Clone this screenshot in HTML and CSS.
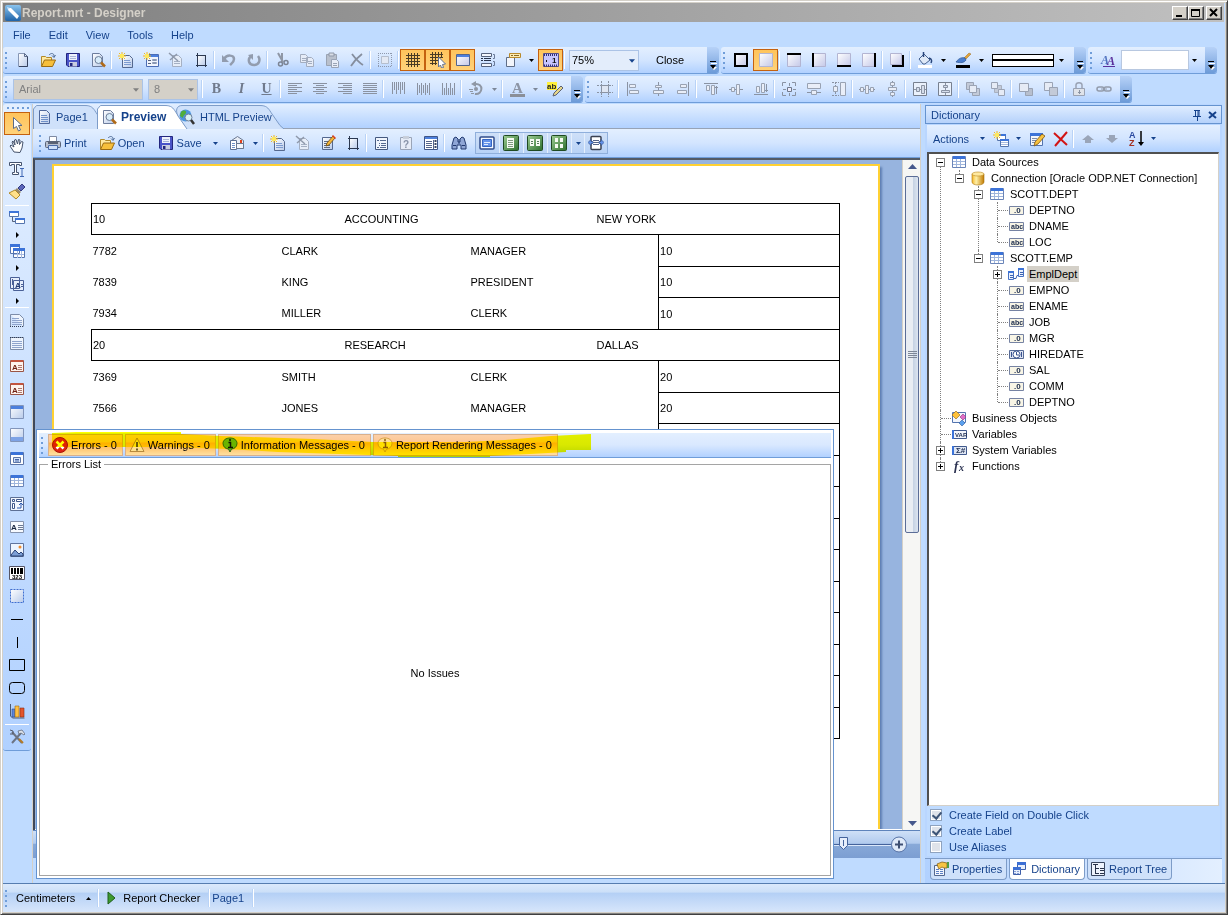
FILE: index.html
```
<!DOCTYPE html>
<html lang="en">
<head>
    <meta charset="UTF-8">
    <meta name="viewport" content="width=device-width, initial-scale=1.0">
    <title>Report.mrt - Designer</title>
    <link rel="stylesheet" href="styles.css">
</head>
<body>

    <!-- Shared gradients -->
    <svg class="gradients" aria-hidden="true">
        <defs>
            <linearGradient id="gBlue" x1="0" y1="0" x2="1" y2="1"><stop offset="0" stop-color="#fff"/><stop offset="1" stop-color="#b9cbea"/></linearGradient>
            <linearGradient id="gLilac" x1="0" y1="0" x2="1" y2="1"><stop offset="0" stop-color="#fff"/><stop offset="1" stop-color="#c4c8e8"/></linearGradient>
            <linearGradient id="gGreen" x1="0" y1="0" x2="1" y2="1"><stop offset="0" stop-color="#9fcf95"/><stop offset="1" stop-color="#2c6e2c"/></linearGradient>
            <linearGradient id="gGold" x1="0" y1="0" x2="1" y2="0"><stop offset="0" stop-color="#f4b72a"/><stop offset=".35" stop-color="#fff0a8"/><stop offset="1" stop-color="#c07a00"/></linearGradient>
            <linearGradient id="gLogo" x1="0" y1="0" x2="0" y2="1"><stop offset="0" stop-color="#8ac4ee"/><stop offset="1" stop-color="#1f63a8"/></linearGradient>
        </defs>
    </svg>

    <!-- Icon sprite -->
    <svg class="sprite" aria-hidden="true">
        <symbol id="logo" viewBox="0 0 16 16"><rect width="16" height="16" rx="2" fill="url(#gLogo)"/><path d="M3 3l3 0 8 8-2 3-9-9z" fill="#fff"/><path d="M2 2l3 1-2 2z" fill="#cfe6fa"/></symbol>
        <symbol id="new" viewBox="0 0 16 16"><path d="M3.500 1.500h6l3 3v10h-9z" fill="url(#gBlue)" stroke="#8797b5"/><path d="M12.500 4v10.500H4" fill="none" stroke="#34415e"/><path d="M9.500 1.500v3h3z" fill="#dfe8f6" stroke="#5e6d8c"/></symbol>
        <symbol id="open" viewBox="0 0 16 16"><path d="M1.500 14V4.500h4l1 1h5V8" fill="#ffe9a0" stroke="#b28a2a"/><path d="M1.500 14.500L4.500 8h11l-3 6.500z" fill="#f6bf3c" stroke="#9a6b12"/><path d="M9 3c2-2 4-2 5 0v2M12 3.500l2 2 1.500-2.500" fill="none" stroke="#4f6b96"/></symbol>
        <symbol id="save" viewBox="0 0 16 16"><path d="M1.500 1.500h13v13H3l-1.500-1.500z" fill="#4a54c8" stroke="#23277e"/><path d="M4 2h8v6H4z" fill="#eef2fc"/><path d="M4 10h8v4.500H4z" fill="#c9cde0"/><path d="M5 11h2.500v3H5z" fill="#23277e"/><path d="M5 4.500h6M5 6.500h6" stroke="#a8b4d8"/></symbol>
        <symbol id="preview" viewBox="0 0 16 16"><path d="M2.500 1.500h7l3 3v10h-10z" fill="url(#gBlue)" stroke="#6d7d9d"/><circle cx="8.500" cy="8" r="3.500" fill="#d8ecfa" stroke="#6e7f99"/><path d="M11 10.500l4 4" stroke="#b06a18" stroke-width="2.500"/></symbol>
        <symbol id="star" viewBox="0 0 16 16"><path d="M4 0v8M0 4h8M1 1l6 6M7 1L1 7" stroke="#f2b822"/><rect x="2" y="2" width="4" height="4" fill="#ffe95c"/></symbol>
        <symbol id="newpage" viewBox="0 0 16 16"><path d="M4.500 3.500h7l3 3v9h-10z" fill="url(#gBlue)" stroke="#54688f"/><path d="M6 8.500h6M6 10.500h7M6 12.500h7" stroke="#7d9bd0"/><use href="#star"/></symbol>
        <symbol id="newform" viewBox="0 0 16 16"><path d="M3.500 2.500h12v12h-12z" fill="#f1f5fd" stroke="#4b6db5"/><path d="M4 3h11v2H4z" fill="#4d80dd"/><path d="M5 8.500h3M5 11.500h3" stroke="#56637c"/><path d="M9.500 7.500h4v1h-4zM9.500 10.500h4v1h-4z" fill="#fff" stroke="#8a98b4"/><use href="#star"/></symbol>
        <symbol id="delpage" viewBox="0 0 16 16"><path d="M4.500 3.500h6l3 3v8h-9z" fill="#e6edf8" stroke="#a5b0c3"/><path d="M6 9.500h6M6 11.500h6" stroke="#a5b0c3"/><path d="M1 1l9 8M9 2L2 8" stroke="#8f99ab" stroke-width="1.500"/></symbol>
        <symbol id="pagesetup" viewBox="0 0 16 16"><path d="M4.500 3.500h8v10h-8z" fill="url(#gBlue)"/><path d="M4.500 1v14M12.500 3v12M3 3.500h10M3 13.500h11" stroke="#2b3850"/></symbol>
        <symbol id="undo" viewBox="0 0 16 16"><path d="M3 7c3-5 10-4 10 0 0 3-2 4-4 6" fill="none" stroke="#929cae" stroke-width="2.500"/><path d="M1 3v7h7z" fill="#929cae"/></symbol>
        <symbol id="redo" viewBox="0 0 16 16"><path d="M5 4c-4 4-2 9 3 9s7-5 4-9" fill="none" stroke="#929cae" stroke-width="2.500"/><path d="M7 2v6L2 3z" fill="#929cae"/></symbol>
        <symbol id="cut" viewBox="0 0 16 16"><path d="M4 1l5 9M8 1v9" stroke="#8f97a5" stroke-width="2"/><circle cx="6.500" cy="12" r="2" fill="none" stroke="#7b8494" stroke-width="1.500"/><circle cx="12" cy="10.500" r="2" fill="none" stroke="#7b8494" stroke-width="1.500"/></symbol>
        <symbol id="copy" viewBox="0 0 16 16"><path d="M1.500 2.500h5l2 2v6h-7zM7.500 5.500h5l2 2v7h-7z" fill="#e6ecf7" stroke="#a3adbf"/><path d="M3 6.500h4M3 8.500h4M9 9.500h4M9 11.500h4" stroke="#a3adbf"/></symbol>
        <symbol id="paste" viewBox="0 0 16 16"><path d="M2.500 2.500h10v11h-10z" fill="#b9c0cc" stroke="#9aa3b2"/><path d="M5 1h5v3H5z" fill="#d7dce5" stroke="#8f98a8"/><path d="M7.500 7.500h5l2 2v6h-7z" fill="#e8edf7" stroke="#99a3b5"/><path d="M9 11.500h4M9 13.500h4" stroke="#99a3b5"/></symbol>
        <symbol id="delete" viewBox="0 0 16 16"><path d="M3 2c3 4 6 8 11 11M13 2C9 5 5 9 2 14" fill="none" stroke="#858e9e" stroke-width="1.800"/></symbol>
        <symbol id="selectall" viewBox="0 0 16 16"><path d="M1.500 1v14M1 1.500h14M14.500 1v14M1 14.500h14" fill="none" stroke="#8e99ad" stroke-dasharray="1 1"/><path d="M4.500 4.500h7v7h-7z" fill="#e3e9f4" stroke="#b5becd"/></symbol>
        <symbol id="grid" viewBox="0 0 16 16"><path d="M1 3.500h14M1 6.500h14M1 9.500h14M1 12.500h14M3.500 1v14M6.500 1v14M9.500 1v14M12.500 1v14" stroke="#4a3c24"/></symbol>
        <symbol id="gridsnap" viewBox="0 0 16 16"><path d="M0 2.500h13M0 5.500h13M0 8.500h8M0 11.500h7M2.500 0v13M5.500 0v13M8.500 0v6M11.500 0v6" stroke="#4a3c24"/><path d="M8.500 5l7 7-3 .5 1 3-2 .5-1-3-2 2z" fill="#fff" stroke="#637292"/></symbol>
        <symbol id="win" viewBox="0 0 16 16"><path d="M1.500 2.500h13v11h-13z" fill="url(#gLilac)" stroke="#52658d"/><path d="M2 3h12v2H2z" fill="#4d80dd"/></symbol>
        <symbol id="order" viewBox="0 0 16 16"><path d="M1.500 1.500h10v3h-10zM1.500 11.500h10v3h-10z" fill="#f3f6fc" stroke="#56637c"/><path d="M1 6.500h2M4 6.500h7M1 8.500h2M4 8.500h7" stroke="#28334a"/><path d="M13 2.500h1.500v4H13M13 9.500h1.500v4H13" fill="none" stroke="#6a7a98"/></symbol>
        <symbol id="labels" viewBox="0 0 16 16"><path d="M1.500 5.500h8v9h-8z" fill="#f2f5fb" stroke="#5f6d86"/><path d="M4.500 1.500h11v4h-11z" fill="#fdebb0" stroke="#b98a2b"/><path d="M6 3.500h2M9 3.500h5" stroke="#8b6a25"/></symbol>
        <symbol id="ruler" viewBox="0 0 16 16"><path d="M.5 1.500h15v13H.5z" fill="#c6c5ff" stroke="#55508e"/><path d="M1 3h14M1 13.500h14" stroke="#352f75" stroke-width="2" stroke-dasharray="1 1"/><text x="9" y="11" font-size="8" font-weight="bold" fill="#111">1</text><rect x="3" y="8" width="1" height="2" fill="#111"/></symbol>
        <symbol id="b-all" viewBox="0 0 16 16"><path d="M2 2h12v12H2z" fill="url(#gLilac)" stroke="#000" stroke-width="2"/></symbol>
        <symbol id="b-none" viewBox="0 0 16 16"><path d="M1.500 1.500h13v13h-13z" fill="url(#gLilac)" stroke="#b3b5d2"/></symbol>
        <symbol id="b-top" viewBox="0 0 16 16"><use href="#b-none"/><path d="M1 2h14" stroke="#000" stroke-width="2"/></symbol>
        <symbol id="b-left" viewBox="0 0 16 16"><use href="#b-none"/><path d="M2 1v14" stroke="#000" stroke-width="2"/></symbol>
        <symbol id="b-bottom" viewBox="0 0 16 16"><use href="#b-none"/><path d="M1 14h14" stroke="#000" stroke-width="2"/></symbol>
        <symbol id="b-right" viewBox="0 0 16 16"><use href="#b-none"/><path d="M14 1v14" stroke="#000" stroke-width="2"/></symbol>
        <symbol id="b-shadow" viewBox="0 0 16 16"><path d="M1.500 1.500h11v11h-11z" fill="url(#gLilac)" stroke="#b3b5d2"/><path d="M3 14h11V3" fill="none" stroke="#000" stroke-width="2"/></symbol>
        <symbol id="fill" viewBox="0 0 16 16"><path d="M2 7l5-5 6 6-5 4H6z" fill="#dfe9f7" stroke="#45618f"/><path d="M6.500 0v5M12 6c3 1 3 3 2 5" fill="none" stroke="#28467c" stroke-width="1.500"/><path d="M1 13h14v3H1z" fill="#fff"/></symbol>
        <symbol id="pen" viewBox="0 0 16 16"><path d="M14 1l2 1-5 5-2-1z" fill="#e2a33a" stroke="#9a6a1f" stroke-width=".5"/><path d="M1 10c3-4 6-5 9-4l1 2c-2 3-5 3-10 2z" fill="#4c7fcf" stroke="#27508f" stroke-width=".7"/><path d="M1 13h14v3H1z" fill="#000"/></symbol>
        <symbol id="styles" viewBox="0 0 16 16"><text x="1" y="12" font-size="12" font-weight="bold" font-style="italic" font-family="Liberation Serif, serif" fill="#4f72c0">A</text><text x="7" y="13" font-size="12" font-weight="bold" font-style="italic" font-family="Liberation Serif, serif" fill="#5a2f9c">A</text><path d="M3 14.500h12" stroke="#5a2f9c"/></symbol>

        <symbol id="al-l" viewBox="0 0 16 16"><path d="M1 2.500h14M1 4.500h9M1 6.500h14M1 8.500h9M1 10.500h14M1 12.500h9" stroke="#8a92a1"/></symbol>
        <symbol id="al-c" viewBox="0 0 16 16"><path d="M1 2.500h14M4 4.500h8M1 6.500h14M4 8.500h8M1 10.500h14M4 12.500h8" stroke="#8a92a1"/></symbol>
        <symbol id="al-r" viewBox="0 0 16 16"><path d="M1 2.500h14M6 4.500h9M1 6.500h14M6 8.500h9M1 10.500h14M6 12.500h9" stroke="#8a92a1"/></symbol>
        <symbol id="al-j" viewBox="0 0 16 16"><path d="M1 2.500h14M1 4.500h14M1 6.500h14M1 8.500h14M1 10.500h14M1 12.500h14" stroke="#8a92a1"/></symbol>
        <symbol id="v-t" viewBox="0 0 16 16"><path d="M2.500 1v12M4.500 1v8M6.500 1v12M8.500 1v8M10.500 1v12M12.500 1v8M14.500 1v12" stroke="#8a92a1"/></symbol>
        <symbol id="v-m" viewBox="0 0 16 16"><path d="M2.500 2v12M4.500 4v8M6.500 2v12M8.500 4v8M10.500 2v12M12.500 4v8M14.500 2v12" stroke="#8a92a1"/></symbol>
        <symbol id="v-b" viewBox="0 0 16 16"><path d="M2.500 2v12M4.500 7v7M6.500 2v12M8.500 7v7M10.500 2v12M12.500 7v7M14.500 2v12" stroke="#8a92a1"/></symbol>
        <symbol id="rotate" viewBox="0 0 16 16"><path d="M7 3c9-1 8 11 0 10" fill="none" stroke="#8f97a4" stroke-width="2"/><path d="M8 0v6L3 3z" fill="#8f97a4"/><path d="M1 8.500h4M2 10.500h3M3 12.500h3" stroke="#8f97a4"/><circle cx="8" cy="8" r="2" fill="#8f97a4"/></symbol>
        <symbol id="fontcolor" viewBox="0 0 16 16"><text x="3" y="12" font-size="15" font-weight="bold" font-family="Liberation Serif, serif" fill="#8d95a5">A</text><path d="M1 13h15v3H1z" fill="#8a8f98"/></symbol>
        <symbol id="marker" viewBox="0 0 16 16"><path d="M0 1h10v8H0z" fill="#fff13c"/><text x="0" y="8" font-size="8" font-weight="bold" fill="#222">ab</text><path d="M14 5l2 2-7 7-3 1 1-3z" fill="#e5d58a" stroke="#5c6272"/></symbol>
        <symbol id="togrid" viewBox="0 0 16 16"><path d="M0 4.500h16M0 11.500h16M4.500 0v16M11.500 0v16" stroke="#8a93a3" stroke-dasharray="2 1"/><path d="M4.500 4.500h7v7h-7z" fill="#dfe6f3" stroke="#8a93a3"/></symbol>
        <symbol id="a-left" viewBox="0 0 16 16"><path d="M2.500 1v14" stroke="#8a93a3"/><path d="M4.500 3.500h6v3h-6zM4.500 9.500h9v3h-9z" fill="#e9eef8" stroke="#99a2b2"/></symbol>
        <symbol id="a-center" viewBox="0 0 16 16"><path d="M8.500 1v14" stroke="#8a93a3"/><path d="M5.500 4.500h6v2h-6zM3.500 9.500h10v3h-10z" fill="#e9eef8" stroke="#99a2b2"/></symbol>
        <symbol id="a-right" viewBox="0 0 16 16"><path d="M13.500 1v14" stroke="#8a93a3"/><path d="M5.500 3.500h6v3h-6zM2.500 9.500h9v3h-9z" fill="#e9eef8" stroke="#99a2b2"/></symbol>
        <symbol id="a-top" viewBox="0 0 16 16"><path d="M1 2.500h14M13.500 5v8M12 6.500h3" stroke="#8a93a3"/><path d="M3.500 4.500h3v5h-3zM8.500 4.500h3v9h-3z" fill="#e9eef8" stroke="#99a2b2"/></symbol>
        <symbol id="a-middle" viewBox="0 0 16 16"><path d="M1 8.500h14" stroke="#8a93a3"/><path d="M3.500 6.500h3v4h-3zM8.500 3.500h3v10h-3z" fill="#e9eef8" stroke="#99a2b2"/></symbol>
        <symbol id="a-bottom" viewBox="0 0 16 16"><path d="M1 13.500h14M13.500 3v8M12 9.500h3" stroke="#8a93a3"/><path d="M3.500 5.500h3v6h-3zM8.500 2.500h3v9h-3z" fill="#e9eef8" stroke="#99a2b2"/></symbol>
        <symbol id="s-both" viewBox="0 0 16 16"><path d="M1.500 5V1.500H5M11 1.500h3.500V5M14.500 11v3.500H11M5 14.500H1.500V11M8.500 2v3M8.500 12v3M2 8.500h3M12 8.500h3" fill="none" stroke="#8a93a3"/><path d="M6.500 6.500h4v4h-4z" fill="#eef" stroke="#6f788a"/></symbol>
        <symbol id="s-w" viewBox="0 0 16 16"><path d="M1.500 2.500h13v5h-13z" fill="#e9eef8" stroke="#99a2b2"/><path d="M1 11.500h4M11 11.500h4" stroke="#8a93a3"/><path d="M5.500 9.500h5v4h-5z" fill="#e9eef8" stroke="#99a2b2"/></symbol>
        <symbol id="s-h" viewBox="0 0 16 16"><path d="M9.500 1.500h5v13h-5z" fill="#e9eef8" stroke="#99a2b2"/><path d="M4.500 1v4M4.500 11v4M1 1.500h7M1 14.500h7" stroke="#8a93a3" stroke-dasharray="2 1"/><path d="M2.500 5.500h4v5h-4z" fill="#e9eef8" stroke="#99a2b2"/></symbol>
        <symbol id="sp-h" viewBox="0 0 16 16"><path d="M0 8.500h16" stroke="#8a93a3"/><path d="M1.500 6.500h3v4h-3zM6.500 4.500h3v8h-3zM11.500 6.500h3v4h-3z" fill="#e9eef8" stroke="#99a2b2"/></symbol>
        <symbol id="sp-v" viewBox="0 0 16 16"><path d="M8.500 0v16" stroke="#8a93a3"/><path d="M6.500 1.500h4v3h-4zM4.500 6.500h8v3h-8zM6.500 11.500h4v3h-4z" fill="#e9eef8" stroke="#99a2b2"/></symbol>
        <symbol id="c-h" viewBox="0 0 16 16"><path d="M1.500 1.500h13v13h-13z" fill="#eaf1fc" stroke="#77808f"/><path d="M2 8.500h12" stroke="#8a93a3"/><path d="M4.500 6.500h3v4h-3zM9.500 4.500h3v8h-3z" fill="#d6deec" stroke="#8a93a3"/></symbol>
        <symbol id="c-v" viewBox="0 0 16 16"><path d="M1.500 1.500h13v13h-13z" fill="#eaf1fc" stroke="#77808f"/><path d="M8.500 2v12" stroke="#8a93a3"/><path d="M6.500 4.500h4v2h-4zM4.500 9.500h8v2h-8z" fill="#d6deec" stroke="#8a93a3"/></symbol>
        <symbol id="z-front" viewBox="0 0 16 16"><path d="M1.500 1.500h7v7h-7zM7.500 7.500h7v7h-7z" fill="#c3cad8" stroke="#9aa3b4"/><path d="M4.500 4.500h7v7h-7z" fill="#e6ebf5" stroke="#9aa3b4"/></symbol>
        <symbol id="z-back" viewBox="0 0 16 16"><path d="M4.500 4.500h7v7h-7z" fill="#c3cad8" stroke="#a8b0bf"/><path d="M1.500 1.500h6v6h-6zM8.500 8.500h6v6h-6z" fill="#e6ebf5" stroke="#9aa3b4"/></symbol>
        <symbol id="z-fwd" viewBox="0 0 16 16"><path d="M7.500 7.500h7v7h-7z" fill="#b7bfce" stroke="#9aa3b4"/><path d="M1.500 2.500h9v8h-9z" fill="#e6ebf5" stroke="#9aa3b4"/></symbol>
        <symbol id="z-bwd" viewBox="0 0 16 16"><path d="M1.500 1.500h8v8h-8z" fill="#e6ebf5" stroke="#9aa3b4"/><path d="M6.500 6.500h8v8h-8z" fill="#c3cad8" stroke="#9aa3b4"/></symbol>
        <symbol id="lock" viewBox="0 0 16 16"><path d="M5 8V4c0-3 6-3 6 0v4" fill="none" stroke="#9aa3b4" stroke-width="1.500"/><path d="M2.500 7.500h11v7h-11z" fill="#dfe3ea" stroke="#9aa3b4"/><path d="M8.500 9v4M7 11.500h3" stroke="#8a93a3"/></symbol>
        <symbol id="link" viewBox="0 0 16 16"><rect x="1" y="6" width="7" height="4" rx="2" fill="none" stroke="#929bab" stroke-width="1.500"/><rect x="8" y="6" width="7" height="4" rx="2" fill="none" stroke="#929bab" stroke-width="1.500"/><path d="M5 8h6" stroke="#929bab"/></symbol>

        <symbol id="page" viewBox="0 0 16 16"><path d="M3.500 1.500h7l3 3v10h-10z" fill="url(#gBlue)" stroke="#4f679a"/><path d="M5 6.500h6M5 8.500h7M5 10.500h7M5 12.500h7" stroke="#6f90c8"/></symbol>
        <symbol id="globe" viewBox="0 0 16 16"><circle cx="6.500" cy="6.500" r="6" fill="#4c95dd"/><path d="M2 3c3-3 6-1 5 1S4 6 4 9L1 7zM8 8c2-1 4 0 4 1l-3 3z" fill="#4fae3a"/><circle cx="9.500" cy="8.500" r="3.500" fill="#d8f0f4" stroke="#6e7f99"/><path d="M12 11l3 4" stroke="#333" stroke-width="2.500"/></symbol>
        <symbol id="print" viewBox="0 0 16 16"><path d="M4.500 1.500h7v5h-7z" fill="#fff" stroke="#7e8aa3"/><rect x=".5" y="6.500" width="15" height="6" rx="1" fill="#b8bfcd" stroke="#5a6478"/><path d="M3 7h10v2H3z" fill="#5a6274"/><path d="M3.500 10.500h9v4h-9z" fill="#cfe1fb" stroke="#4b6ba8"/></symbol>
        <symbol id="mail" viewBox="0 0 16 16"><path d="M2.500 5.500l6-4 6 4v8h-12z" fill="#e8edf6" stroke="#6b7890"/><path d="M1.500 5.500h6v9h-6z" fill="#fff" stroke="#5c7095"/><path d="M3 8.500h3M3 10.500h3M3 12.500h3" stroke="#6f90c8"/><path d="M7.500 8.500h7v5h-7z" fill="#f4f6fb" stroke="#6b7890"/><rect x="11" y="5" width="2" height="3" fill="#e0401b"/></symbol>
        <symbol id="editpage" viewBox="0 0 16 16"><path d="M2.500 2.500h10v12h-10z" fill="url(#gBlue)" stroke="#54688f"/><path d="M4 6.500h5M4 8.500h4M4 10.500h6M4 12.500h6" stroke="#5d6a82"/><path d="M13 1l2 2-6 7-3 1 1-3z" fill="#f4b63a" stroke="#6d4a12" stroke-width=".8"/><path d="M13 0l3 3-1 1-3-3z" fill="#d93b1f"/></symbol>
        <symbol id="outline" viewBox="0 0 16 16"><path d="M2.500 2.500h12v12h-12z" fill="#f0f5fd" stroke="#45597f"/><path d="M4 5.500h2M7 5.500h6M6 8.500h1M8 8.500h5M6 10.500h1M8 10.500h5M4 12.500h2M7 12.500h6" stroke="#566a90"/></symbol>
        <symbol id="params" viewBox="0 0 16 16"><path d="M2.500 2.500h11v12h-11z" fill="#e6ecf7" stroke="#9aa5b8"/><path d="M5 1h6v3H5z" fill="#c8cfdb"/><text x="5" y="13" font-size="10" font-weight="bold" fill="#8893a8">?</text></symbol>
        <symbol id="thumbs" viewBox="0 0 16 16"><path d="M1.500 1.500h13v13h-13z" fill="#fff" stroke="#3f5688"/><path d="M2 2h12v2H2z" fill="#4d80dd"/><path d="M3 6.500h6M3 8.500h6M3 10.500h6M3 12.500h6M10.500 5v9" stroke="#55658a"/><path d="M12.500 5v9" stroke="#3a4762" stroke-width="2" stroke-dasharray="2 1"/></symbol>
        <symbol id="find" viewBox="0 0 16 16"><path d="M3 3l2-1 2 2v3h2V4l2-2 2 1 2 7v4h-5v-4H6v4H1v-4z" fill="#8fa6d6" stroke="#223a70"/><path d="M2 10.500h3M11 10.500h3M8 4v5" stroke="#223a70"/></symbol>
        <symbol id="m-full" viewBox="0 0 16 16"><rect x="1" y="2" width="14" height="12" rx="1" fill="#f4f8ff" stroke="#314c8c" stroke-width="1.500"/><path d="M3.500 4.500h9v7h-9z" fill="#6593ea" stroke="#3465c4"/><path d="M5 7.500h6M5 9.500h4" stroke="#e0ebff"/></symbol>
        <symbol id="m-bg" viewBox="0 0 16 16"><rect x=".5" y=".5" width="15" height="15" rx="1" fill="url(#gGreen)" stroke="#1f4a22"/></symbol>
        <symbol id="m-one" viewBox="0 0 16 16"><use href="#m-bg"/><path d="M4 3h7v10H4z" fill="#f5faf2"/><path d="M5 5.500h5M5 7.500h5M5 9.500h5M5 11.500h5" stroke="#7f9a80"/></symbol>
        <symbol id="m-two" viewBox="0 0 16 16"><use href="#m-bg"/><path d="M3 4h4v7H3zM9 4h4v7H9z" fill="#f5faf2"/><path d="M4 6.500h2M4 8.500h2M10 6.500h2M10 8.500h2" stroke="#58795a"/></symbol>
        <symbol id="m-multi" viewBox="0 0 16 16"><use href="#m-bg"/><path d="M4 3h3v4H4zM9 3h3v4H9zM4 9h3v4H4zM9 9h3v4H9z" fill="#f5faf2"/></symbol>
        <symbol id="m-width" viewBox="0 0 16 16"><rect x="3" y="1.500" width="10" height="13" rx="1" fill="#fff" stroke="#3b4252" stroke-width="1.500"/><path d="M0 7.500l3-3v2h2v2H3v2zM16 7.500l-3-3v2h-2v2h2v2z" fill="#6593ea" stroke="#27447f" stroke-width=".6"/><path d="M5 5.500h6M5 7.500h6M5 9.500h6" stroke="#55658a"/></symbol>

        <symbol id="cursor" viewBox="0 0 16 16"><path d="M4.500 1.500v11l3-2 2 4.500 2-1-2-4.500h3.500z" fill="#fff" stroke="#5b6b88"/></symbol>
        <symbol id="hand" viewBox="0 0 16 16"><path d="M5 14L1 8l1-1 3 2-2-5 1-1 2 4-.5-5 1.500-.5L8.500 6l1-4.500 1.500.5-.5 4.500 2-3 1.500.5-1 6-2 4.500z" fill="#fff" stroke="#46536c"/></symbol>
        <symbol id="textedit" viewBox="0 0 16 16"><path d="M.5 1.500h12v3h-2v-1h-3v8h2v2h-6v-2h2v-8h-3v1h-2z" fill="#fff" stroke="#45536e"/><path d="M11 7.500h4M13 7.500v8M11 15.500h4" stroke="#3f67b5"/></symbol>
        <symbol id="brush" viewBox="0 0 16 16"><path d="M13 0l3 3-4 4-3-3z" fill="#5b66bb" stroke="#343c80"/><path d="M8 4l4 4-2 2-4-4z" fill="#9a8a6a"/><path d="M6 6l5 5-4 4L0 9z" fill="#ffe08a" stroke="#b08a2a"/></symbol>
        <symbol id="bands" viewBox="0 0 16 16"><path d="M.5 1.500h9v5h-9zM6.500 8.500h9v5h-9z" fill="#fff" stroke="#5474ae"/><path d="M0 1h10v2H0zM6 8h10v2H6z" fill="#3c73d8"/><path d="M3.500 7v4.500H6" fill="none" stroke="#56637c"/></symbol>
        <symbol id="cross" viewBox="0 0 16 16"><path d="M1.500 1.500h9v9h-9zM4.500 5.500h11v9h-11z" fill="#fff" stroke="#5474ae"/><path d="M1 1h10v3H1zM4 5h12v3H4z" fill="#3c73d8"/><path d="M5 11.500h10M8.500 8v7M12.500 8v7" stroke="#a8bbe0"/></symbol>
        <symbol id="comps" viewBox="0 0 16 16"><path d="M1.500 1.500h9v11h-9zM4.500 4.500h10v10h-10z" fill="#e6eefb" stroke="#4a6097"/><text x="6" y="12" font-size="8" font-weight="bold" fill="#243b75">A</text><path d="M12 8.500h2M12 10.500h2M3.500 3v6" stroke="#4a6097"/></symbol>
        <symbol id="rtitle" viewBox="0 0 16 16"><path d="M1.500 2.500h9l4 4v8" fill="#eef4fd" stroke="#7d8da9"/><path d="M1.500 2.500v12" stroke="#7d8da9"/><path d="M3 6.500h7M3 8.500h10M3 10.500h10M3 12.500h10" stroke="#8fa4cc"/><path d="M1 14.500h14" stroke="#333e55" stroke-dasharray="1 1"/></symbol>
        <symbol id="rsum" viewBox="0 0 16 16"><path d="M1.500 2.500h13v12h-13z" fill="#eef4fd" stroke="#7d8da9"/><path d="M3 6.500h10M3 8.500h10M3 10.500h10M3 12.500h10" stroke="#8fa4cc"/><path d="M1 2.500h14" stroke="#333e55" stroke-dasharray="1 1"/></symbol>
        <symbol id="phead" viewBox="0 0 16 16"><path d="M1.500 2.500h13v11h-13z" fill="#fdf3ee" stroke="#9a5546"/><path d="M2 2h12v2H2z" fill="#c2543f"/><text x="3" y="12" font-size="8" font-weight="bold" fill="#6e1f12">A</text><path d="M9 7.500h4M9 9.500h4M9 11.500h4" stroke="#b07a70"/></symbol>
        <symbol id="data" viewBox="0 0 16 16"><path d="M1.500 1.500h13v13h-13z" fill="url(#gBlue)" stroke="#8295ba"/><path d="M2 2h12v3H2z" fill="#4d80dd"/></symbol>
        <symbol id="foot" viewBox="0 0 16 16"><path d="M1.500 1.500h13v13h-13z" fill="url(#gBlue)" stroke="#8295ba"/><path d="M2 10h12v4H2z" fill="#7ea3e6"/></symbol>
        <symbol id="panelb" viewBox="0 0 16 16"><path d="M1.500 2.500h13v12h-13z" fill="#fff" stroke="#5d76a8"/><path d="M2 2h12v3H2z" fill="#3c73d8"/><path d="M4.500 7.500h7v5h-7z" fill="#d6e4fb" stroke="#5d76a8"/><path d="M6 9.500h4M6 11h4" stroke="#4766a6"/></symbol>
        <symbol id="table" viewBox="0 0 16 16"><path d="M1.500 2.500h13v11h-13z" fill="#fff" stroke="#6b85b8"/><path d="M2 2h12v3H2z" fill="#3c73d8"/><path d="M2 7.500h12M2 10.500h12M5.500 5v8M9.500 5v8" stroke="#9fb5dc"/></symbol>
        <symbol id="crosstab" viewBox="0 0 16 16"><path d="M1.500 1.500h13v13h-13z" fill="#f3f7fe" stroke="#5d7095"/><path d="M3.500 3.500h2v2h-2zM7.500 3.500h5v2h-5zM3.500 7.500h2v5h-2z" fill="#fff" stroke="#41598c"/><path d="M8 12h4V8M10 9l2-2 2 2" fill="none" stroke="#2e5bb0"/></symbol>
        <symbol id="text" viewBox="0 0 16 16"><path d="M1.500 2.500h13v11h-13z" fill="#f7faff" stroke="#8593ad"/><text x="2" y="11" font-size="8" font-weight="bold" fill="#16243f">A</text><path d="M9 6.500h5M9 8.500h5M9 10.500h5" stroke="#6c7a94"/></symbol>
        <symbol id="image" viewBox="0 0 16 16"><path d="M1.500 1.500h13v13h-13z" fill="#eef5ff" stroke="#60749d"/><circle cx="11" cy="5" r="1.500" fill="#f08b2c"/><path d="M2 13l4-5 4 4 2-2 2 2v2H2z" fill="#7d9fd6" stroke="#2b4374"/></symbol>
        <symbol id="barcode" viewBox="0 0 16 16"><path d="M.5 1.500h15v13H.5z" fill="#fff" stroke="#556"/><path d="M3 3v6M6 3v6M9 3v6M13 3v6" stroke="#000" stroke-width="2"/><path d="M11.500 3v6" stroke="#000"/><text x="3" y="14" font-size="6" font-weight="bold" fill="#000">323</text></symbol>
        <symbol id="shape" viewBox="0 0 16 16"><path d="M1.500 1.500h13v13h-13z" fill="url(#gBlue)" stroke="#3f6fd0" stroke-dasharray="2 1"/></symbol>
        <symbol id="hline" viewBox="0 0 16 16"><path d="M2 8.500h12" stroke="#000"/></symbol>
        <symbol id="vline" viewBox="0 0 16 16"><path d="M8.500 3v11" stroke="#000"/></symbol>
        <symbol id="rect" viewBox="0 0 16 16"><path d="M.5 2.500h15v11H.5z" fill="none" stroke="#000"/></symbol>
        <symbol id="rrect" viewBox="0 0 16 16"><rect x=".5" y="2.500" width="15" height="11" rx="3" fill="none" stroke="#000"/></symbol>
        <symbol id="chart" viewBox="0 0 16 16"><path d="M1.500 1v12l2 2h12" fill="none" stroke="#4c5a74"/><path d="M3 6h3v8H3z" fill="#5b86dc" stroke="#2a4b91" stroke-width=".6"/><path d="M6 3h4v11H6z" fill="#ffc044" stroke="#9d6a10" stroke-width=".6"/><path d="M11 5h4v9h-4z" fill="#e3542c" stroke="#8d2b10" stroke-width=".6"/></symbol>
        <symbol id="tools" viewBox="0 0 16 16"><path d="M3 14L12 4M3 3l10 11" stroke="#6c7484" stroke-width="2"/><path d="M9 2l4-1 3 4-1 1-3-2-2 1z" fill="#dde2ea" stroke="#545d6e" stroke-width=".7"/><path d="M1 1l3 1v3L1 5" fill="none" stroke="#545d6e"/><path d="M10 10l4 4" stroke="#b57b27" stroke-width="2"/></symbol>

        <symbol id="error" viewBox="0 0 16 16"><circle cx="8" cy="8" r="7.500" fill="#e02412" stroke="#a81508"/><path d="M4.500 4.500l7 7M11.500 4.500l-7 7" stroke="#fff" stroke-width="2.500"/></symbol>
        <symbol id="warning" viewBox="0 0 16 16"><path d="M8 1l7 13.500H1z" fill="#ffe08c" stroke="#b88a3c"/><path d="M8 5v5M8 11.500v2" stroke="#3a2c10" stroke-width="1.500"/></symbol>
        <symbol id="info" viewBox="0 0 16 16"><path d="M8 1c4 0 7 2 7 5.500S12 12 9.500 12L8 15l-1.500-3C4 12 1 10 1 6.500S4 1 8 1z" fill="#6ab33a" stroke="#2e6a18"/><path d="M8 2v2M6.500 5.500H8.500V10M6 10.500h5" fill="none" stroke="#111" stroke-width="1.500"/></symbol>
        <symbol id="rinfo" viewBox="0 0 16 16"><path d="M8 1c4 0 7 2 7 5.500S12 12 9.500 12L8 15l-1.500-3C4 12 1 10 1 6.500S4 1 8 1z" fill="#ffe09a" stroke="#d8a046"/><path d="M8 2v2M6.500 5.500H8.500V10M6 10.500h5" fill="none" stroke="#8a5a10" stroke-width="1.500"/></symbol>

        <symbol id="newds" viewBox="0 0 16 16"><path d="M4.500 3.500h8v6h-8zM7.500 8.500h8v7h-8z" fill="#fff" stroke="#5474ae"/><path d="M4 3h9v2H4zM7 8h9v2H7z" fill="#3c73d8"/><path d="M8 11.500h7M8 13.500h7" stroke="#a8bbe0"/><use href="#star"/></symbol>
        <symbol id="editds" viewBox="0 0 16 16"><path d="M1.500 2.500h12v12h-12z" fill="#f2f6fd" stroke="#5474ae"/><path d="M1 2h13v3H1z" fill="#3c73d8"/><path d="M3 7.500h5M3 9.500h4M3 11.500h3" stroke="#7d8cab"/><path d="M13 3l3 2-7 8-4 2 1-4z" fill="#f8c340" stroke="#7a5414" stroke-width=".8"/></symbol>
        <symbol id="redx" viewBox="0 0 16 16"><path d="M1 2l13 12M14 1L2 15" stroke="#d21414" stroke-width="2"/></symbol>
        <symbol id="up" viewBox="0 0 16 16"><path d="M8 4l6 5h-3v3H5V9H2z" fill="#9aa5b8"/></symbol>
        <symbol id="down" viewBox="0 0 16 16"><path d="M8 12l6-5h-3V4H5v3H2z" fill="#9aa5b8"/></symbol>
        <symbol id="sort" viewBox="0 0 16 16"><text x="1" y="7" font-size="9" font-weight="bold" fill="#2a49a0">A</text><text x="1" y="15" font-size="9" font-weight="bold" fill="#a33020">Z</text><path d="M13 0v12" stroke="#000" stroke-width="1.500"/><path d="M10 11h6l-3 4z" fill="#000"/></symbol>
        <symbol id="pin" viewBox="0 0 16 16"><path d="M5 3.500h6M6.500 3v6M9 3v6M10 3v6M4 9.500h8M8.500 10v4" stroke="#14418b" fill="none"/></symbol>
        <symbol id="close" viewBox="0 0 16 16"><path d="M4 5l7 6M11 5l-7 6" stroke="#14418b" stroke-width="2"/></symbol>
        <symbol id="db" viewBox="0 0 16 16"><path d="M2 4v8c0 4 12 4 12 0V4z" fill="url(#gGold)" stroke="#a87412" stroke-width=".6"/><ellipse cx="8" cy="4" rx="6" ry="2" fill="#ffe9a0" stroke="#b98720" stroke-width=".6"/></symbol>
        <symbol id="num" viewBox="0 0 16 16"><path d="M1.500 4.500h14v8h-14z" fill="#f8f5e6" stroke="#7683a3"/><text x="6" y="11" font-size="8" font-weight="bold" fill="#20304f">.0</text></symbol>
        <symbol id="abc" viewBox="0 0 16 16"><path d="M1.500 4.500h14v8h-14z" fill="#f8f5e6" stroke="#7683a3"/><text x="3" y="11" font-size="7" font-weight="bold" fill="#20304f">abc</text></symbol>
        <symbol id="date" viewBox="0 0 16 16"><path d="M1.500 4.500h14v8h-14z" fill="#dfe5f2" stroke="#566a96"/><circle cx="8.500" cy="8.500" r="3.500" fill="#fff" stroke="#3a5390"/><path d="M8.500 6v3H11M3.500 6v5M13.500 6v5" stroke="#3a5390" fill="none"/></symbol>
        <symbol id="relation" viewBox="0 0 16 16"><path d="M.5 5.500h5v8h-5zM10.500 2.500h5v8h-5z" fill="#eaf1fd" stroke="#4671c4"/><path d="M0 5h6v2H0zM10 2h6v2h-6z" fill="#3c73d8"/><path d="M2 9.500h3M2 11.500h3M12 6.500h3M12 8.500h3M6 12.500h2l1-3h1" fill="none" stroke="#3c62b0"/></symbol>
        <symbol id="bo" viewBox="0 0 16 16"><path d="M1.500 2.500h13v10h-13z" fill="#f2f6fd" stroke="#5474ae"/><path d="M5 1l4 4-4 4-4-4z" fill="#ffc23a" stroke="#8f6312" stroke-width=".6"/><path d="M12 4l3 3-3 3-3-3z" fill="#df6fc8" stroke="#8b2f78" stroke-width=".6"/><path d="M11 10l3 3-3 3-3-3z" fill="#5aa0ee" stroke="#2b5ba0" stroke-width=".6"/></symbol>
        <symbol id="var" viewBox="0 0 16 16"><path d="M1.500 4.500h14v8h-14z" fill="#f4f6fb" stroke="#41598c"/><path d="M1 4h2v9H1z" fill="#3c73d8"/><text x="4" y="11" font-size="6" font-weight="bold" fill="#1c2c50">VAR</text></symbol>
        <symbol id="sysvar" viewBox="0 0 16 16"><path d="M1.500 4.500h14v8h-14z" fill="#dfe6f3" stroke="#41598c"/><path d="M1 4h2v9H1z" fill="#3c73d8"/><text x="5" y="11" font-size="8" font-weight="bold" fill="#1c2c50">Σ#</text></symbol>
        <symbol id="fx" viewBox="0 0 16 16"><text x="3" y="12" font-size="13" font-weight="bold" font-style="italic" font-family="Liberation Serif, serif" fill="#2a3150">f</text><text x="8" y="13" font-size="10" font-weight="bold" font-style="italic" font-family="Liberation Serif, serif" fill="#2a3150">x</text></symbol>
        <symbol id="props" viewBox="0 0 16 16"><path d="M1.500 4.500h10v10h-10z" fill="#f2f6fd" stroke="#54688f"/><path d="M3 8.500h3M3 10.500h3M3 12.500h3M7 8.500h3M7 10.500h3M7 12.500h3" stroke="#5b7fc4"/><path d="M4 3l5-2 5 1v5h-3l-2-1-3 2-1-2z" fill="#f6c445" stroke="#8d641a" stroke-width=".8"/><path d="M14 1h2v6h-2z" fill="#4f9c48"/></symbol>
        <symbol id="dict" viewBox="0 0 16 16"><path d="M5.500 1.500h8v7h-8zM1.500 6.500h7v7h-7z" fill="#e8effc" stroke="#3f5fa8"/><path d="M5 1h9v3H5zM1 6h8v3H1z" fill="#3c6fd4"/><path d="M2 10.500h6M2 12.500h6" stroke="#8ba2d4" stroke-dasharray="2 1"/></symbol>
        <symbol id="tree" viewBox="0 0 16 16"><path d="M1.500 1.500h13v13h-13z" fill="#eef3fc" stroke="#39465f"/><path d="M3 3.500h5M5.500 4v9M6 7.500h3M6 12.500h3M10 7.500h4M10 12.500h4M10 9.500h4" stroke="#28334a"/></symbol>
        <symbol id="play" viewBox="0 0 16 16"><path d="M5 2l7 6-7 6z" fill="#3d9a30" stroke="#1f5e1a"/></symbol>
        <symbol id="caret" viewBox="0 0 7 4"><path d="M0 0h7L3.500 4z" fill="currentColor"/></symbol>
        <symbol id="more" viewBox="0 0 8 10"><path d="M2 3h6v1H2zM2 7h6L5 10z" fill="#fff"/><path d="M1 1h6v1H1zM1 5h6L4 9z" fill="#000"/></symbol>
    </svg>

    <div class="window">
        <header class="titlebar">
            <svg class="icon"><use href="#logo"/></svg>
            <h1>Report.mrt - Designer</h1>
            <div class="window-buttons">
                <button title="Minimize"><svg viewBox="0 0 12 10"><path d="M2 8h6" stroke="#000" stroke-width="2"/></svg></button>
                <button title="Maximize"><svg viewBox="0 0 12 10"><path d="M1.500 1.500h8v7h-8z" fill="none" stroke="#000"/><path d="M1 2h9" stroke="#000" stroke-width="2"/></svg></button>
                <button class="last" title="Close"><svg viewBox="0 0 12 10"><path d="M2 1l7 7M9 1L2 8" stroke="#000" stroke-width="2"/></svg></button>
            </div>
        </header>

        <nav class="menu">
            <a href="#">File</a>
            <a href="#">Edit</a>
            <a href="#">View</a>
            <a href="#">Tools</a>
            <a href="#">Help</a>
        </nav>

        <div class="toolbar-row">
            <div class="toolbar">
                <span class="grip"></span>
                <button class="tool" title="New"><svg><use href="#new"/></svg></button>
                <button class="tool" title="Open"><svg><use href="#open"/></svg></button>
                <button class="tool" title="Save"><svg><use href="#save"/></svg></button>
                <button class="tool" title="Preview"><svg><use href="#preview"/></svg></button>
                <span class="sep"></span>
                <button class="tool" title="New Page"><svg><use href="#newpage"/></svg></button>
                <button class="tool" title="New Form"><svg><use href="#newform"/></svg></button>
                <button class="tool" title="Delete Page"><svg><use href="#delpage"/></svg></button>
                <button class="tool" title="Page Setup"><svg><use href="#pagesetup"/></svg></button>
                <span class="sep"></span>
                <button class="tool" title="Undo"><svg><use href="#undo"/></svg></button>
                <button class="tool" title="Redo"><svg><use href="#redo"/></svg></button>
                <span class="sep"></span>
                <button class="tool" title="Cut"><svg><use href="#cut"/></svg></button>
                <button class="tool" title="Copy"><svg><use href="#copy"/></svg></button>
                <button class="tool" title="Paste"><svg><use href="#paste"/></svg></button>
                <button class="tool" title="Delete"><svg><use href="#delete"/></svg></button>
                <span class="sep"></span>
                <button class="tool" title="Select All"><svg><use href="#selectall"/></svg></button>
                <span class="sep"></span>
                <button class="tool active" title="Show Grid"><svg><use href="#grid"/></svg></button>
                <button class="tool active" title="Align to Grid"><svg><use href="#gridsnap"/></svg></button>
                <button class="tool active" title="Show Headers"><svg><use href="#win"/></svg></button>
                <button class="tool" title="Show Order"><svg><use href="#order"/></svg></button>
                <button class="tool" title="Quick Info"><svg><use href="#labels"/></svg></button>
                <button class="drop black" title="Quick Info options"><svg><use href="#caret"/></svg></button>
                <button class="tool active" title="Rulers"><svg><use href="#ruler"/></svg></button>
                <span class="sep"></span>
                <span class="combo zoom">
                    <select aria-label="Zoom"><option>75%</option></select>
                    <svg><use href="#caret"/></svg>
                </span>
                <button class="text-button">Close</button>
                <button class="more" title="Toolbar options"><svg><use href="#more"/></svg></button>
            </div>
            <div class="toolbar">
                <span class="grip"></span>
                <button class="tool" title="All Borders"><svg><use href="#b-all"/></svg></button>
                <button class="tool active" title="No Border"><svg><use href="#b-none"/></svg></button>
                <span class="sep"></span>
                <button class="tool" title="Top Border"><svg><use href="#b-top"/></svg></button>
                <button class="tool" title="Left Border"><svg><use href="#b-left"/></svg></button>
                <button class="tool" title="Bottom Border"><svg><use href="#b-bottom"/></svg></button>
                <button class="tool" title="Right Border"><svg><use href="#b-right"/></svg></button>
                <span class="sep"></span>
                <button class="tool" title="Shadow"><svg><use href="#b-shadow"/></svg></button>
                <span class="sep"></span>
                <button class="tool" title="Fill Color"><svg><use href="#fill"/></svg></button>
                <button class="drop black" title="Fill colors"><svg><use href="#caret"/></svg></button>
                <button class="tool" title="Border Color"><svg><use href="#pen"/></svg></button>
                <button class="drop black" title="Border colors"><svg><use href="#caret"/></svg></button>
                <button class="line-style" title="Border Style"><span></span></button>
                <button class="drop black" title="Border styles"><svg><use href="#caret"/></svg></button>
                <button class="more" title="Toolbar options"><svg><use href="#more"/></svg></button>
            </div>
            <div class="toolbar">
                <span class="grip"></span>
                <button class="tool" title="Style Designer"><svg><use href="#styles"/></svg></button>
                <input class="style-box" type="text" aria-label="Style">
                <button class="drop black" title="Styles"><svg><use href="#caret"/></svg></button>
                <button class="more" title="Toolbar options"><svg><use href="#more"/></svg></button>
            </div>
        </div>

        <div class="toolbar-row second">
            <div class="toolbar">
                <span class="grip"></span>
                <span class="combo font disabled">
                    <select aria-label="Font" disabled><option>Arial</option></select>
                    <svg><use href="#caret"/></svg>
                </span>
                <span class="combo size disabled">
                    <select aria-label="Font size" disabled><option>8</option></select>
                    <svg><use href="#caret"/></svg>
                </span>
                <span class="sep"></span>
                <button class="tool letter bold" title="Bold">B</button>
                <button class="tool letter italic" title="Italic">I</button>
                <button class="tool letter underline" title="Underline">U</button>
                <span class="sep"></span>
                <button class="tool" title="Align Left"><svg><use href="#al-l"/></svg></button>
                <button class="tool" title="Align Center"><svg><use href="#al-c"/></svg></button>
                <button class="tool" title="Align Right"><svg><use href="#al-r"/></svg></button>
                <button class="tool" title="Justify"><svg><use href="#al-j"/></svg></button>
                <span class="sep"></span>
                <button class="tool" title="Text Top"><svg><use href="#v-t"/></svg></button>
                <button class="tool" title="Text Middle"><svg><use href="#v-m"/></svg></button>
                <button class="tool" title="Text Bottom"><svg><use href="#v-b"/></svg></button>
                <span class="sep"></span>
                <button class="tool" title="Angle"><svg><use href="#rotate"/></svg></button>
                <button class="drop gray" title="Angles"><svg><use href="#caret"/></svg></button>
                <span class="sep"></span>
                <button class="tool" title="Text Color"><svg><use href="#fontcolor"/></svg></button>
                <button class="drop gray" title="Text colors"><svg><use href="#caret"/></svg></button>
                <button class="tool" title="Text Format"><svg><use href="#marker"/></svg></button>
                <button class="more" title="Toolbar options"><svg><use href="#more"/></svg></button>
            </div>
            <div class="toolbar">
                <span class="grip"></span>
                <button class="tool" title="Snap to Grid"><svg><use href="#togrid"/></svg></button>
                <span class="sep"></span>
                <button class="tool" title="Lefts"><svg><use href="#a-left"/></svg></button>
                <button class="tool" title="Centers"><svg><use href="#a-center"/></svg></button>
                <button class="tool" title="Rights"><svg><use href="#a-right"/></svg></button>
                <span class="sep"></span>
                <button class="tool" title="Tops"><svg><use href="#a-top"/></svg></button>
                <button class="tool" title="Middles"><svg><use href="#a-middle"/></svg></button>
                <button class="tool" title="Bottoms"><svg><use href="#a-bottom"/></svg></button>
                <span class="sep"></span>
                <button class="tool" title="Same Size"><svg><use href="#s-both"/></svg></button>
                <button class="tool" title="Same Width"><svg><use href="#s-w"/></svg></button>
                <button class="tool" title="Same Height"><svg><use href="#s-h"/></svg></button>
                <span class="sep"></span>
                <button class="tool" title="Horizontal Spacing"><svg><use href="#sp-h"/></svg></button>
                <button class="tool" title="Vertical Spacing"><svg><use href="#sp-v"/></svg></button>
                <span class="sep"></span>
                <button class="tool" title="Center Horizontally"><svg><use href="#c-h"/></svg></button>
                <button class="tool" title="Center Vertically"><svg><use href="#c-v"/></svg></button>
                <span class="sep"></span>
                <button class="tool" title="Bring to Front"><svg><use href="#z-front"/></svg></button>
                <button class="tool" title="Send to Back"><svg><use href="#z-back"/></svg></button>
                <span class="sep"></span>
                <button class="tool" title="Move Forward"><svg><use href="#z-fwd"/></svg></button>
                <button class="tool" title="Move Backward"><svg><use href="#z-bwd"/></svg></button>
                <span class="sep"></span>
                <button class="tool" title="Lock"><svg><use href="#lock"/></svg></button>
                <button class="tool" title="Link"><svg><use href="#link"/></svg></button>
                <button class="more" title="Toolbar options"><svg><use href="#more"/></svg></button>
            </div>
        </div>

        <main class="workspace">
            <aside class="palette">
                <span class="palette-grip"></span>
                <button class="active" title="Select"><svg><use href="#cursor"/></svg></button>
                <button title="Hand"><svg><use href="#hand"/></svg></button>
                <button title="Text Editor"><svg><use href="#textedit"/></svg></button>
                <button title="Copy Style"><svg><use href="#brush"/></svg></button>
                <hr>
                <button title="Bands"><svg><use href="#bands"/></svg></button>
                <span class="flyout"></span>
                <button title="Cross Bands"><svg><use href="#cross"/></svg></button>
                <span class="flyout"></span>
                <button title="Components"><svg><use href="#comps"/></svg></button>
                <span class="flyout"></span>
                <hr>
                <button title="Report Title"><svg><use href="#rtitle"/></svg></button>
                <button title="Report Summary"><svg><use href="#rsum"/></svg></button>
                <button title="Page Header"><svg><use href="#phead"/></svg></button>
                <button title="Page Footer"><svg><use href="#phead"/></svg></button>
                <button title="Header"><svg><use href="#data"/></svg></button>
                <button title="Footer"><svg><use href="#foot"/></svg></button>
                <button title="Data Band"><svg><use href="#panelb"/></svg></button>
                <button title="Table"><svg><use href="#table"/></svg></button>
                <button title="Cross-Tab"><svg><use href="#crosstab"/></svg></button>
                <button title="Text"><svg><use href="#text"/></svg></button>
                <button title="Image"><svg><use href="#image"/></svg></button>
                <button title="Bar Code"><svg><use href="#barcode"/></svg></button>
                <button title="Panel"><svg><use href="#shape"/></svg></button>
                <button title="Horizontal Line"><svg><use href="#hline"/></svg></button>
                <button title="Vertical Line"><svg><use href="#vline"/></svg></button>
                <button title="Rectangle"><svg><use href="#rect"/></svg></button>
                <button title="Rounded Rectangle"><svg><use href="#rrect"/></svg></button>
                <button title="Chart"><svg><use href="#chart"/></svg></button>
                <hr>
                <button title="Options"><svg><use href="#tools"/></svg></button>
            </aside>

            <section class="editor">
                <div class="tabs">
                    <button class="tab page-tab">
                        <svg class="shape" viewBox="0 0 86 24"><path d="M.5 24V4l3-3.500H52c6 0 8 2 11 7l9 13 4 3.500" fill="#cfe1fa" stroke="#7d9cc8"/></svg>
                        <svg class="icon"><use href="#page"/></svg>
                        <span>Page1</span>
                    </button>
                    <button class="tab preview-tab">
                        <svg class="shape" viewBox="0 0 104 24"><path d="M.5 25V4l3-3.500H68c6 0 8 2 11 7l9 13 5 4.500" fill="#fff" stroke="#7d9cc8"/></svg>
                        <svg class="icon"><use href="#preview"/></svg>
                        <span>Preview</span>
                    </button>
                    <button class="tab html-tab">
                        <svg class="shape" viewBox="0 0 116 24"><path d="M11 24L2 11C-1 5 1 .5 6 .5H84c6 0 8 2 11 7l9 13 4 3.500" fill="#cfe1fa" stroke="#7d9cc8"/></svg>
                        <svg class="icon"><use href="#globe"/></svg>
                        <span>HTML Preview</span>
                    </button>
                </div>

                <div class="preview-bar">
                    <span class="grip"></span>
                    <button class="labelled first"><svg><use href="#print"/></svg>Print</button>
                    <button class="labelled"><svg><use href="#open"/></svg>Open</button>
                    <button class="labelled"><svg><use href="#save"/></svg>Save</button>
                    <button class="drop wide" title="Save options"><svg><use href="#caret"/></svg></button>
                    <button class="tool" title="Send"><svg><use href="#mail"/></svg></button>
                    <button class="drop" title="Send options"><svg><use href="#caret"/></svg></button>
                    <span class="sep"></span>
                    <button class="tool" title="New Page"><svg><use href="#newpage"/></svg></button>
                    <button class="tool" title="Delete Page"><svg><use href="#delpage"/></svg></button>
                    <button class="tool" title="Edit Page"><svg><use href="#editpage"/></svg></button>
                    <button class="tool" title="Page Size"><svg><use href="#pagesetup"/></svg></button>
                    <span class="sep"></span>
                    <button class="tool" title="Bookmarks"><svg><use href="#outline"/></svg></button>
                    <button class="tool" title="Parameters"><svg><use href="#params"/></svg></button>
                    <button class="tool" title="Thumbnails"><svg><use href="#thumbs"/></svg></button>
                    <span class="sep"></span>
                    <button class="tool" title="Find"><svg><use href="#find"/></svg></button>
                    <div class="modes">
                        <button title="Full Screen"><svg><use href="#m-full"/></svg></button>
                        <button title="One Page"><svg><use href="#m-one"/></svg></button>
                        <button title="Two Pages"><svg><use href="#m-two"/></svg></button>
                        <button title="Multiple Pages"><svg><use href="#m-multi"/></svg></button>
                        <button class="arrow" title="Page grid"><svg><use href="#caret"/></svg></button>
                        <button title="Page Width"><svg><use href="#m-width"/></svg></button>
                    </div>
                </div>

                <div class="viewer">
                    <div class="canvas">
                        <div class="sheet">
                            <table class="report">
                                <colgroup>
                                    <col class="c1"><col class="c2"><col class="c3"><col class="c3"><col class="c2"><col>
                                </colgroup>
                                <tbody>
                                    <tr class="dept"><td colspan="2">10</td><td colspan="2">ACCOUNTING</td><td colspan="2">NEW YORK</td></tr>
                                    <tr><td>7782</td><td colspan="2">CLARK</td><td colspan="2">MANAGER</td><td class="no">10</td></tr>
                                    <tr><td>7839</td><td colspan="2">KING</td><td colspan="2">PRESIDENT</td><td class="no">10</td></tr>
                                    <tr><td>7934</td><td colspan="2">MILLER</td><td colspan="2">CLERK</td><td class="no">10</td></tr>
                                    <tr class="dept"><td colspan="2">20</td><td colspan="2">RESEARCH</td><td colspan="2">DALLAS</td></tr>
                                    <tr><td>7369</td><td colspan="2">SMITH</td><td colspan="2">CLERK</td><td class="no">20</td></tr>
                                    <tr><td>7566</td><td colspan="2">JONES</td><td colspan="2">MANAGER</td><td class="no">20</td></tr>
                                    <tr><td colspan="5"></td><td class="no"></td></tr>
                                    <tr><td colspan="5"></td><td class="no"></td></tr>
                                    <tr><td colspan="5"></td><td class="no"></td></tr>
                                    <tr><td colspan="5"></td><td class="no"></td></tr>
                                    <tr><td colspan="5"></td><td class="no"></td></tr>
                                    <tr><td colspan="5"></td><td class="no"></td></tr>
                                    <tr><td colspan="5"></td><td class="no"></td></tr>
                                    <tr><td colspan="5"></td><td class="no"></td></tr>
                                    <tr><td colspan="5"></td><td class="no"></td></tr>
                                    <tr><td colspan="5"></td><td class="no"></td></tr>
                                </tbody>
                            </table>
                        </div>
                    </div>
                    <div class="scrollbar">
                        <svg viewBox="0 0 9 5"><path d="M0 5h9L4.500 0z" fill="#46588c"/></svg>
                        <div class="thumb"><span></span></div>
                        <svg viewBox="0 0 9 5"><path d="M0 0h9L4.500 5z" fill="#46588c"/></svg>
                    </div>
                </div>

                <div class="zoombar">
                    <svg class="track" viewBox="0 0 80 20">
                        <path d="M0 9.500h58" stroke="#44639c"/><path d="M0 10.500h58" stroke="#dbe8fb"/>
                        <path d="M5.500 2.500h8v8l-4 4-4-4z" fill="#e6eefb" stroke="#44639c"/><path d="M9.500 5v6" stroke="#44639c"/>
                        <circle cx="65" cy="9.500" r="7.500" fill="#dfe9f8" stroke="#5672a6"/><path d="M61 9.500h8M65 5.500v8" stroke="#3e4f72" stroke-width="2"/>
                    </svg>
                </div>

                <!-- Report checker window -->
                <section class="checker">
                    <div class="checker-bar">
                        <span class="grip"></span>
                        <button class="checker-button"><svg><use href="#error"/></svg>Errors - 0</button>
                        <button class="checker-button"><svg><use href="#warning"/></svg>Warnings - 0</button>
                        <button class="checker-button"><svg><use href="#info"/></svg>Information Messages - 0</button>
                        <button class="checker-button"><svg><use href="#rinfo"/></svg>Report Rendering Messages - 0</button>
                        <svg class="highlight" viewBox="0 0 552 30"><path d="M13 4l24-1h105v2l40 2 30 1 62 2 60 3h92l40-2 46-4 39-2h1v16h-25v2l-36 2-40 2v1h-92v-1l-60-2-60-2-50-3-60-2H13z" fill="#ffff00"/></svg>
                    </div>
                    <fieldset>
                        <legend>Errors List</legend>
                        <p>No Issues</p>
                    </fieldset>
                </section>
            </section>

            <aside class="dictionary">
                <div class="panel-title">
                    <h2>Dictionary</h2>
                    <button title="Auto Hide"><svg><use href="#pin"/></svg></button>
                    <button title="Close"><svg><use href="#close"/></svg></button>
                </div>
                <div class="panel-bar">
                    <button class="actions">Actions</button>
                    <button class="drop" title="Actions menu"><svg><use href="#caret"/></svg></button>
                    <button class="tool" title="New Item"><svg><use href="#newds"/></svg></button>
                    <button class="drop" title="New items"><svg><use href="#caret"/></svg></button>
                    <button class="tool" title="Edit"><svg><use href="#editds"/></svg></button>
                    <button class="tool" title="Delete"><svg><use href="#redx"/></svg></button>
                    <span class="sep"></span>
                    <button class="tool" title="Move Up"><svg><use href="#up"/></svg></button>
                    <button class="tool" title="Move Down"><svg><use href="#down"/></svg></button>
                    <button class="tool" title="Sort"><svg><use href="#sort"/></svg></button>
                    <button class="drop" title="Sort options"><svg><use href="#caret"/></svg></button>
                </div>

                <div class="tree-box">
                    <ul class="tree">
                        <li>
                            <div class="node"><i class="box minus"></i><svg><use href="#table"/></svg><span>Data Sources</span></div>
                            <ul>
                                <li>
                                    <div class="node"><i class="box minus"></i><svg><use href="#db"/></svg><span>Connection [Oracle ODP.NET Connection]</span></div>
                                    <ul>
                                        <li>
                                            <div class="node"><i class="box minus"></i><svg><use href="#table"/></svg><span>SCOTT.DEPT</span></div>
                                            <ul>
                                                <li><div class="node"><i></i><svg><use href="#num"/></svg><span>DEPTNO</span></div></li>
                                                <li><div class="node"><i></i><svg><use href="#abc"/></svg><span>DNAME</span></div></li>
                                                <li><div class="node"><i></i><svg><use href="#abc"/></svg><span>LOC</span></div></li>
                                            </ul>
                                        </li>
                                        <li>
                                            <div class="node"><i class="box minus"></i><svg><use href="#table"/></svg><span>SCOTT.EMP</span></div>
                                            <ul>
                                                <li><div class="node"><i class="box plus"></i><svg><use href="#relation"/></svg><span class="selected">EmplDept</span></div></li>
                                                <li><div class="node"><i></i><svg><use href="#num"/></svg><span>EMPNO</span></div></li>
                                                <li><div class="node"><i></i><svg><use href="#abc"/></svg><span>ENAME</span></div></li>
                                                <li><div class="node"><i></i><svg><use href="#abc"/></svg><span>JOB</span></div></li>
                                                <li><div class="node"><i></i><svg><use href="#num"/></svg><span>MGR</span></div></li>
                                                <li><div class="node"><i></i><svg><use href="#date"/></svg><span>HIREDATE</span></div></li>
                                                <li><div class="node"><i></i><svg><use href="#num"/></svg><span>SAL</span></div></li>
                                                <li><div class="node"><i></i><svg><use href="#num"/></svg><span>COMM</span></div></li>
                                                <li><div class="node"><i></i><svg><use href="#num"/></svg><span>DEPTNO</span></div></li>
                                            </ul>
                                        </li>
                                    </ul>
                                </li>
                            </ul>
                        </li>
                        <li><div class="node"><i></i><svg><use href="#bo"/></svg><span>Business Objects</span></div></li>
                        <li><div class="node"><i></i><svg><use href="#var"/></svg><span>Variables</span></div></li>
                        <li><div class="node"><i class="box plus"></i><svg><use href="#sysvar"/></svg><span>System Variables</span></div></li>
                        <li><div class="node"><i class="box plus"></i><svg><use href="#fx"/></svg><span>Functions</span></div></li>
                    </ul>
                </div>

                <div class="checks">
                    <label><input type="checkbox" checked>Create Field on Double Click</label>
                    <label><input type="checkbox" checked>Create Label</label>
                    <label><input type="checkbox">Use Aliases</label>
                </div>

                <div class="panel-tabs">
                    <button><svg><use href="#props"/></svg>Properties</button>
                    <button class="current"><svg><use href="#dict"/></svg>Dictionary</button>
                    <button><svg><use href="#tree"/></svg>Report Tree</button>
                </div>
            </aside>
        </main>

        <footer class="statusbar">
            <span class="grip"></span>
            <button class="units">Centimeters <svg viewBox="0 0 5 3"><path d="M0 3h5L2.500 0z" fill="#000"/></svg></button>
            <span class="sep"></span>
            <button class="check"><svg class="icon"><use href="#play"/></svg>Report Checker</button>
            <span class="sep"></span>
            <span class="current-page">Page1</span>
            <span class="sep"></span>
        </footer>
    </div>

</body>
</html>
```
FILE: styles.css
```
* {
    box-sizing: border-box;
}

body {
    margin: 0;
    height: 100vh;
    overflow: hidden;
    font-family: "Liberation Sans", Arial, sans-serif;
    font-size: 11px;
    line-height: 16px;
    color: #000;
}

button,
input,
select {
    font: inherit;
    color: inherit;
    margin: 0;
    padding: 0;
}

button {
    display: flex;
    align-items: center;
    justify-content: center;
    flex: none;
    background: none;
    border: 0;
    white-space: nowrap;
}

svg {
    display: block;
    flex: none;
}

.gradients {
    position: absolute;
    width: 0;
    height: 0;
}

.sprite {
    display: none;
}

.icon {
    width: 16px;
    height: 16px;
}

/* Window frame */
.window {
    height: 100%;
    display: flex;
    flex-direction: column;
    background: #bfdbff;
    border: 1px solid #d4d0c8;
    border-right-color: #404040;
    border-bottom-color: #404040;
    box-shadow: inset 1px 1px 0 #fff, inset -1px -1px 0 #808080, inset 0 0 0 2px #d4d0c8;
    padding: 2px;
}

.titlebar {
    display: flex;
    align-items: center;
    flex: none;
    height: 19px;
    margin-right: 1px;
    padding: 0 2px;
    background: linear-gradient(to right, #808080, #c0c0c0);
    color: #d4d0c8;
}

.titlebar h1 {
    margin: 0 auto 0 1px;
    font-size: 12px;
    line-height: 18px;
}

.window-buttons {
    display: flex;
}

.window-buttons button {
    width: 16px;
    height: 14px;
    background: #d4d0c8;
    border: 1px solid #fff;
    border-right-color: #404040;
    border-bottom-color: #404040;
    box-shadow: inset -1px -1px 0 #808080;
}

.window-buttons .last {
    margin-left: 2px;
}

.window-buttons svg {
    width: 12px;
    height: 10px;
}

.menu {
    display: flex;
    flex: none;
    align-items: center;
    gap: 18px;
    height: 25px;
    padding-left: 10px;
}

.menu a {
    color: #15428b;
    text-decoration: none;
}

/* Toolbars */
.toolbar-row {
    display: flex;
    flex: none;
    gap: 2px;
    height: 29px;
}

.toolbar-row.second {
    height: 28px;
}

.toolbar {
    display: flex;
    align-items: center;
    height: 27px;
    background: linear-gradient(#e3efff, #d3e5ff 50%, #b1d1ff);
    border-bottom: 1px solid #6f9dd9;
    border-radius: 3px;
}

.grip {
    flex: none;
    width: 7px;
    height: 18px;
    background: linear-gradient(#6f9dd9, #6f9dd9) 2px 1px / 2px 2px no-repeat,
        linear-gradient(#6f9dd9, #6f9dd9) 2px 6px / 2px 2px no-repeat,
        linear-gradient(#6f9dd9, #6f9dd9) 2px 11px / 2px 2px no-repeat,
        linear-gradient(#6f9dd9, #6f9dd9) 2px 16px / 2px 2px no-repeat;
}

.sep {
    flex: none;
    width: 3px;
    height: 18px;
    background: linear-gradient(to right, #b9d3f7 1px, #fff 1px, #fff 2px, transparent 2px);
}

.tool {
    justify-content: flex-start;
    width: 25px;
    height: 22px;
    padding-left: 5px;
}

.tool svg,
.labelled svg,
.modes svg {
    width: 16px;
    height: 16px;
}

.tool.active {
    padding-left: 4px;
    background: linear-gradient(#ffc45c, #ffd27a);
    border: 1px solid #c4610f;
}

.drop {
    width: 13px;
    height: 22px;
    color: #15428b;
}

.drop svg {
    width: 5px;
    height: 3px;
}

.drop.black {
    color: #000;
}

.drop.gray {
    color: #7c8798;
}

.more {
    align-self: stretch;
    align-items: flex-end;
    width: 12px;
    padding-bottom: 3px;
    border-radius: 0 3px 3px 0;
    background: linear-gradient(#b7d2f8, #6d9bd8);
}

.more svg {
    width: 8px;
    height: 10px;
}

.combo {
    position: relative;
    flex: none;
    height: 21px;
}

.combo select {
    width: 100%;
    height: 100%;
    padding: 0 2px;
    appearance: none;
    background: #e3edfb;
    border: 1px solid #abc3e6;
    border-radius: 0;
    color: #000;
    opacity: 1;
}

.combo svg {
    position: absolute;
    right: 4px;
    top: 9px;
    width: 6px;
    height: 4px;
    color: #15428b;
}

.combo.disabled select {
    padding: 0 5px;
    background: #d4d0c8;
    color: #808080;
}

.combo.disabled svg {
    color: #808080;
}

.combo.zoom {
    width: 70px;
    margin-left: 3px;
}

.combo.font {
    width: 130px;
    margin: 0 5px 0 3px;
}

.combo.size {
    width: 50px;
    margin-right: 3px;
}

.text-button {
    width: 62px;
    margin-right: 6px;
}

.line-style {
    width: 62px;
    height: 13px;
    margin-left: 4px;
    background: #fff;
    border: 1px solid #000;
}

.line-style span {
    width: 100%;
    height: 2px;
    background: #000;
}

.line-style + .drop {
    width: 15px;
    margin-right: 5px;
}

.style-box {
    width: 68px;
    height: 20px;
    margin-left: 1px;
    background: #fff;
    border: 1px solid #b8c8e0;
    border-radius: 0;
}

.style-box + .drop {
    width: 10px;
    margin-right: 6px;
}

.letter {
    justify-content: center;
    padding: 0;
    font-family: "Liberation Serif", "Times New Roman", serif;
    font-size: 14px;
    font-weight: bold;
    color: #707a8c;
}

.italic {
    font-style: italic;
}

.underline {
    text-decoration: underline;
}

.second .tool + .more {
    margin-left: 4px;
}

/* Main area */
.workspace {
    display: flex;
    flex: 1;
    min-height: 0;
    padding-right: 3px;
}

.palette {
    display: flex;
    flex-direction: column;
    align-items: center;
    align-self: flex-start;
    flex: none;
    width: 28px;
    margin-right: 1px;
    padding-bottom: 1px;
    background: linear-gradient(#e3efff, #b1d1ff);
    border-bottom: 1px solid #6f9dd9;
    border-radius: 3px;
}

.palette-grip {
    width: 23px;
    height: 8px;
    background: repeating-linear-gradient(to right, #6f9dd9 0 2px, transparent 2px 5px) 1px 3px / 100% 2px no-repeat;
}

.palette button {
    align-items: flex-start;
    width: 26px;
    height: 23px;
    padding-top: 3px;
}

.palette button svg {
    width: 16px;
    height: 16px;
}

.palette .active {
    padding-top: 3px;
    background: linear-gradient(#ffc45c, #ffd27a);
    border: 1px solid #c4610f;
}

.palette hr {
    width: 24px;
    height: 1px;
    margin: 1px 0;
    border: 0;
    background: #fff;
}

.flyout {
    height: 6px;
    margin: 2px 0;
    border: 3px solid transparent;
    border-right-width: 0;
    border-left-color: #000;
}

.editor {
    position: relative;
    display: flex;
    flex-direction: column;
    flex: 1;
    min-width: 0;
    margin-right: 4px;
    padding-bottom: 25px;
    border-left: 1px solid #d4d0c8;
    border-right: 1px solid #d4d0c8;
}

.tabs {
    display: flex;
    align-items: flex-end;
    flex: none;
    height: 25px;
    border-bottom: 1px solid #97a3b6;
    background: linear-gradient(#e3efff, #b1d1ff);
}

.tab {
    position: relative;
    justify-content: flex-start;
    gap: 4px;
    height: 22px;
    padding-left: 3px;
    color: #15428b;
}

.tab span,
.tab .icon {
    position: relative;
}

.tab .shape {
    position: absolute;
    left: 0;
    bottom: -1px;
    height: 24px;
}

.page-tab {
    width: 64px;
}

.page-tab .shape {
    width: 86px;
}

.preview-tab {
    z-index: 2;
    width: 79px;
    padding-left: 4px;
    font-size: 12px;
    font-weight: bold;
}

.preview-tab .shape {
    width: 104px;
}

.html-tab {
    width: 116px;
    gap: 5px;
    z-index: 3;
}

.html-tab .shape {
    width: 116px;
}

.preview-bar {
    display: flex;
    align-items: center;
    flex: none;
    height: 29px;
    padding-left: 4px;
    background: linear-gradient(#e3efff, #d3e5ff 50%, #b1d1ff);
    border-bottom: 1px solid #6f9dd9;
    color: #15428b;
}

.labelled {
    gap: 3px;
    height: 22px;
    padding: 0 6px 0 7px;
}

.labelled.first {
    padding: 0 5px 0 1px;
}

.drop.wide {
    width: 16px;
}

.modes {
    display: flex;
    height: 22px;
    margin-left: 4px;
    border: 1px solid #8fafdc;
    background: linear-gradient(#cfe0f8, #b8d2f6);
}

.modes button {
    justify-content: flex-start;
    width: 24px;
    padding-left: 3px;
    border-right: 1px solid #e5effc;
}

.modes button:last-child {
    width: 22px;
    border-right: 0;
}

.modes .arrow {
    width: 13px;
    padding-left: 4px;
}

.modes .arrow svg {
    width: 5px;
    height: 3px;
}

.viewer {
    display: flex;
    flex: 1;
    min-height: 0;
    border-top: 2px solid #525a66;
    border-left: 2px solid #404858;
}

.canvas {
    flex: 1;
    min-width: 0;
    overflow: hidden;
    padding: 4px 22px 0 17px;
    background: #97b4df;
    border-bottom: 1px solid #fff;
}

.sheet {
    height: 110%;
    padding: 37px 38px 0 37px;
    background: #fff;
    border: 2px solid #ffd133;
    box-shadow: 2px 3px 2px #5f7fb3;
}

.report {
    width: 100%;
    table-layout: fixed;
    border-collapse: collapse;
    border: 1px solid #000;
    border-left-width: 0;
    border-bottom-width: 0;
}

.report td {
    height: 31px;
    padding: 0 1px;
    border: 0;
}

.report tr:nth-child(even) td {
    height: 32px;
}

.report .dept {
    border: 1px solid #000;
}

.report .no {
    border: 1px solid #000;
}

.c1 {
    width: 189px;
}

.c2 {
    width: 63px;
}

.c3 {
    width: 126px;
}

.scrollbar {
    display: flex;
    flex-direction: column;
    align-items: center;
    flex: none;
    width: 18px;
    padding: 4px 1px 4px 2px;
    background: #f6f6f4;
    border-left: 1px solid #d4d0c8;
}

.scrollbar svg {
    width: 9px;
    height: 5px;
}

.thumb {
    display: flex;
    align-items: center;
    justify-content: center;
    width: 14px;
    height: 54%;
    margin: 7px 0 auto;
    background: linear-gradient(to right, #e9edf3 55%, #c3d0e2 56%, #dde5f0);
    border: 1px solid #5b6d97;
    border-radius: 2px;
}

.thumb span {
    width: 9px;
    height: 7px;
    background: repeating-linear-gradient(#7d8797 0 1px, transparent 1px 2px);
}

.zoombar {
    display: flex;
    align-items: center;
    justify-content: flex-end;
    flex: none;
    height: 28px;
    border-top: 1px solid #5f84bb;
    background: linear-gradient(#cfe0f7, #b2cbee 45%, #88a9d8 50%, #7c9ed2);
}

.track {
    width: 80px;
    height: 20px;
    margin-right: 6px;
}

/* Report checker */
.checker {
    position: absolute;
    left: 3px;
    right: 86px;
    bottom: 4px;
    height: 450px;
    display: flex;
    flex-direction: column;
    padding: 3px 2px 2px;
    background: #fff;
    border: 1px solid #6593cf;
}

.checker-bar {
    position: relative;
    display: flex;
    align-items: center;
    flex: none;
    gap: 2px;
    height: 25px;
    background: linear-gradient(#e3efff, #d9e8ff 50%, #b1d1ff);
    border-bottom: 1px solid #6f9dd9;
}

.checker-button {
    gap: 3px;
    height: 22px;
    padding: 0 5px 0 3px;
    background: linear-gradient(#fcd0a8, #fdc795 35%, #ffb04a 40%, #ffe0a0);
    border: 1px solid #d9b08c;
}

.checker-button svg {
    width: 16px;
    height: 16px;
}

/* Yellow marker stroke over the buttons */
.highlight {
    position: absolute;
    left: 0;
    top: -4px;
    width: 552px;
    height: 30px;
    mix-blend-mode: multiply;
    pointer-events: none;
}

.checker fieldset {
    display: flex;
    align-items: center;
    justify-content: center;
    flex: 1;
    min-width: 0;
    margin: 0;
    padding: 0 8px;
    border: 1px solid #a5a5a5;
}

.checker legend {
    padding: 0 3px;
    line-height: 12px;
}

.checker p {
    margin: 0;
}

/* Dictionary panel */
.dictionary {
    display: flex;
    flex-direction: column;
    flex: none;
    width: 297px;
    background: #b9d6ff;
}

.panel-title {
    display: flex;
    align-items: center;
    flex: none;
    height: 19px;
    margin-top: 1px;
    padding-left: 5px;
    border: 1px solid #6593cf;
    background: linear-gradient(#dfecff, #b5d2fb);
    color: #15428b;
}

.panel-title h2 {
    margin: 0 auto 0 0;
    font-size: 11px;
    font-weight: normal;
}

.panel-title svg {
    width: 16px;
    height: 16px;
}

.panel-bar {
    display: flex;
    align-items: center;
    flex: none;
    height: 27px;
    margin: 1px 2px 0;
    padding-left: 6px;
    background: linear-gradient(#e3efff, #d3e5ff 50%, #b1d1ff);
    color: #15428b;
}

.panel-bar .tool {
    width: 24px;
}

.panel-bar .drop {
    width: 12px;
}

.actions {
    margin-right: 7px;
}

.tree-box {
    flex: 1;
    min-height: 0;
    margin: 0 3px 0 2px;
    background: #fff;
    border: 1px solid #d4d0c8;
    border-top: 2px solid #505050;
    border-left: 2px solid #505050;
    padding-left: 2px;
}

.tree,
.tree ul {
    list-style: none;
    margin: 0;
    padding: 0;
}

.tree ul {
    padding-left: 19px;
}

.tree li {
    position: relative;
}

.tree li::before {
    content: "";
    position: absolute;
    left: 9px;
    top: 0;
    bottom: 0;
    border-left: 1px dotted #808080;
}

.tree li:last-child::before {
    bottom: auto;
    height: 8px;
}

.tree > li:first-child::before {
    top: 8px;
}

.node {
    position: relative;
    display: flex;
    align-items: center;
    height: 16px;
}

.node i {
    width: 10px;
    margin-left: 10px;
    border-top: 1px dotted #808080;
}

.node .box {
    width: 9px;
    height: 9px;
    margin: 0 6px 0 5px;
    border: 1px solid #808080;
    background: linear-gradient(#000, #000) center / 5px 1px no-repeat, #fff;
}

.node .plus {
    background: linear-gradient(#000, #000) center / 5px 1px no-repeat, linear-gradient(#000, #000) center / 1px 5px no-repeat, #fff;
}

.node svg {
    width: 16px;
    height: 16px;
}

.node span {
    margin-left: 3px;
    padding: 0 2px;
    white-space: nowrap;
}

.node .selected {
    background: #d4d0c8;
}

.checks {
    flex: none;
    margin: 0 2px;
    padding: 1px 3px;
    background: #bfdbff;
    color: #15428b;
}

.checks label {
    display: flex;
    align-items: center;
    height: 16px;
}

.checks input {
    width: 12px;
    height: 12px;
    margin-right: 7px;
    appearance: none;
    border: 1px solid #8fa3bf;
    background: #dfe3ea;
    box-shadow: inset 0 0 0 1px #fff;
}

.checks input:checked::before {
    content: "";
    display: block;
    width: 4px;
    height: 7px;
    margin-left: 3px;
    border: solid #3d5578;
    border-width: 0 2px 2px 0;
    transform: rotate(40deg);
}

.panel-tabs {
    display: flex;
    align-items: flex-start;
    flex: none;
    gap: 2px;
    height: 25px;
    margin-top: 2px;
    padding-left: 5px;
    border-top: 1px solid #7d9cc8;
    background: linear-gradient(to right, #b1d1ff, #e3efff);
    color: #15428b;
}

.panel-tabs button {
    gap: 3px;
    height: 21px;
    padding: 0 4px 0 2px;
    border: 1px solid #7d9cc8;
    border-top: 0;
    border-radius: 0 0 4px 4px;
    background: #cfe1fa;
}

.panel-tabs .current {
    background: #fff;
}

.panel-tabs svg {
    width: 16px;
    height: 16px;
}

/* Status bar */
.statusbar {
    display: flex;
    align-items: center;
    flex: none;
    height: 29px;
    border-top: 1px solid #567db0;
    background: linear-gradient(#dbe9fc, #cbdff8 30%, #b3cff5 31%, #d7e6fb);
}

.units {
    gap: 11px;
    padding: 0 6px;
}

.units svg {
    width: 5px;
    height: 3px;
}

.check {
    gap: 4px;
    padding: 0 8px 0 3px;
}

.current-page {
    padding: 0 8px 0 1px;
    color: #15428b;
}
```
